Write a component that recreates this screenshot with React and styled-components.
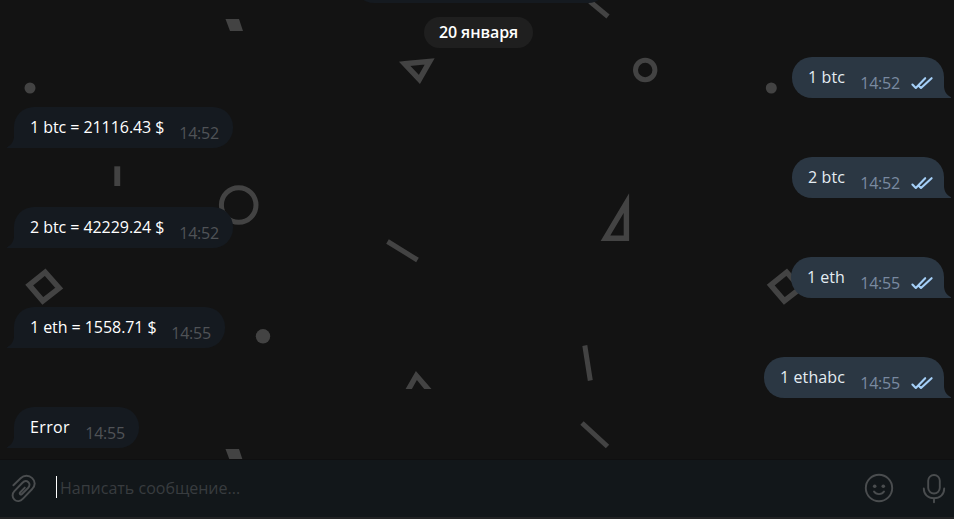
import React from 'react';
import styled, { createGlobalStyle } from 'styled-components';

const GlobalStyle = createGlobalStyle`
  * { box-sizing: border-box; }
  body { margin: 0; background: #131313; }
`;

const Page = styled.div`
  position: relative;
  display: flex;
  flex-direction: column;
  height: 519px;
  overflow: hidden;
  background: #131313;
  font: 16px/22px "Open Sans", "Noto Sans", sans-serif;
`;

const Wallpaper = styled.svg`
  position: absolute;
  inset: 0;
`;

const History = styled.main`
  position: relative;
  display: flex;
  flex-direction: column;
  height: 459px;
  overflow: hidden;
`;

const PreviousBubble = styled.div`
  flex: none;
  width: 254px;
  height: 3px;
  margin-left: 354px;
  overflow: hidden;
  &::after {
    content: "";
    display: block;
    height: 41px;
    margin-top: -38px;
    border-radius: 20px;
    background: #151a20;
  }
`;

const DateBadge = styled.div`
  flex: none;
  align-self: flex-start;
  width: 109px;
  height: 31px;
  margin: 14px 0 9px 424px;
  border-radius: 16px;
  background: #1f1f1f;
  color: #fff;
  font-weight: 600;
  letter-spacing: -0.1px;
  line-height: 30px;
  text-align: center;
  white-space: nowrap;
`;

const Row = styled.div`
  flex: none;
  display: flex;
  justify-content: ${(p) => (p.$out ? 'flex-end' : 'flex-start')};
  height: 50px;
  padding: 0 10px 0 14px;
`;

const Bubble = styled.div`
  position: relative;
  display: flex;
  width: ${(p) => p.$width}px;
  height: 41px;
  padding-left: 16px;
  border-radius: ${(p) => (p.$out ? '20px 20px 0 20px' : '20px 20px 20px 0')};
  background: ${(p) => (p.$out ? '#2b3743' : '#151a20')};
  white-space: nowrap;
`;

const Tail = styled.svg`
  position: absolute;
  bottom: 0;
  ${(p) => (p.$out ? 'right: -7px; transform: scaleX(-1);' : 'left: -7px;')}
`;

const Text = styled.span`
  flex: 1;
  margin-top: 9px;
  color: ${(p) => (p.$out ? '#e4ecf2' : '#fff')};
  letter-spacing: ${(p) => p.$spacing}px;
`;

const Time = styled.time`
  margin-top: 15px;
  margin-right: ${(p) => (p.$out ? 10 : 14)}px;
  color: ${(p) => (p.$out ? '#7a8aa0' : '#505357')};
  letter-spacing: -0.2px;
`;

const Ticks = styled.svg`
  margin: 19px 10px 0 0;
`;

const Composer = styled.footer`
  position: relative;
  display: flex;
  align-items: flex-start;
  height: 60px;
  border-top: 1px solid #0f0f10;
  border-bottom: 2px solid #222324;
  background: #12171a;
`;

const Icon = styled.svg`
  flex: none;
  margin: ${(p) => p.$margin};
  fill: none;
  stroke: #4a4d4f;
  stroke-width: 1.9;
  stroke-linecap: round;
  stroke-linejoin: round;
`;

const Caret = styled.span`
  width: 1px;
  height: 22px;
  margin: 16px 3px 0 20px;
  background: #fff;
`;

const Placeholder = styled.span`
  flex: 1;
  margin-top: 17px;
  color: #383c3f;
`;

const messages = [
  { out: true, text: '1 btc', time: '14:52', width: 152, spacing: 0.1 },
  { text: '1 btc = 21116.43 $', time: '14:52', width: 219, spacing: -0.06 },
  { out: true, text: '2 btc', time: '14:52', width: 152, spacing: 0.1 },
  { text: '2 btc = 42229.24 $', time: '14:52', width: 219, spacing: -0.06 },
  { out: true, text: '1 eth', time: '14:55', width: 153, spacing: 0 },
  { text: '1 eth = 1558.71 $', time: '14:55', width: 211, spacing: -0.06 },
  { out: true, text: '1 ethabc', time: '14:55', width: 180, spacing: 0.1 },
  { text: 'Error', time: '14:55', width: 125, spacing: 0.35 },
];

function Shapes() {
  return (
    <Wallpaper width="954" height="460" viewBox="0 0 954 460" fill="none" stroke="#434343" strokeWidth="5">
      <g fill="#434343" stroke="none">
        <circle cx="30" cy="88" r="5.5" />
        <circle cx="771.3" cy="88" r="5.5" />
        <circle cx="263" cy="336.3" r="7.2" />
        <path d="M225.5 19h13.5l4 12h-13z" />
        <path d="M225.5 449h13.5l4 12h-13z" />
        <path d="M114.3 166.3h5.9v19.7h-5.9z" />
      </g>
      <circle cx="645.2" cy="70" r="9.7" />
      <circle cx="238.7" cy="205" r="17.3" />
      <path d="M590 1.5l18 15" />
      <path d="M387.5 241.5l30 18.5M584.8 345.5l5.5 35M582 423l25.5 23.5" />
      <path strokeWidth="5.4" d="M404.7 63.8l25-2.4-10.3 18z" />
      <path strokeWidth="5.4" d="M626.4 203v35.3h-21z" />
      <path fill="#434343" stroke="none" d="M415.9 371l15.6 18h-7.3l-7.3-9-5 9h-6.3z" />
      <path strokeWidth="5.5" d="M45.2 272.2l14 16-16.4 12.7-13.6-15.9z" />
      <path strokeWidth="5.5" d="M786.7 272.2l14 16-16.4 12.7-13.6-15.9z" />
    </Wallpaper>
  );
}

function Message({ out, text, time, width, spacing }) {
  return (
    <Row $out={out}>
      <Bubble $out={out} $width={width}>
        <Tail $out={out} width="8" height="12" viewBox="0 0 8 12">
          <path d="M8 0H7C7 5 4.5 9 0 11.2V12H8z" fill={out ? '#2b3743' : '#151a20'} />
        </Tail>
        <Text $out={out} $spacing={spacing}>{text}</Text>
        <Time $out={out}>{time}</Time>
        {out && (
          <Ticks width="24" height="15" viewBox="0 0 24 15" fill="none" stroke="#a5d0f8" strokeWidth="2.1" strokeLinecap="round" strokeLinejoin="round">
            <path d="M2.4 8.6L5.8 12L15.2 2.2M9.4 10.4L11 12L21.6 2.2" />
          </Ticks>
        )}
      </Bubble>
    </Row>
  );
}

export default function App() {
  return (
    <>
      <GlobalStyle />
      <Page>
        <Shapes />
        <History>
          <PreviousBubble />
          <DateBadge>20 января</DateBadge>
          {messages.map((m, i) => (
            <Message key={i} {...m} />
          ))}
        </History>
        <Composer>
          <Icon width="26" height="30" viewBox="0 0 26 30" $margin="14px 0 0 10px">
            <path d="M3.4 11.3L10.6 4.3C14 1 19 1 22.2 4.2S25.2 11.5 22.2 15L13 24.6C10.3 27.6 6.8 27.9 4.4 25.6S1.9 19.8 4.4 17.2L12.2 9C14.3 6.8 16.8 6.8 18.4 8.2S19.9 12 18 14L12 20C10.7 21.3 8.9 19.8 10.1 18.5L14.8 13.6" />
          </Icon>
          <Caret />
          <Placeholder>Написать сообщение...</Placeholder>
          <Icon width="30" height="30" viewBox="0 0 30 30" $margin="13px 28px 0 0">
            <circle cx="15" cy="15" r="13.2" />
            <path d="M10 18.6C12 22 18 22 20 18.6" />
            <g fill="#4a4d4f" stroke="none">
              <circle cx="10.7" cy="13.2" r="1.8" />
              <circle cx="19.3" cy="13.2" r="1.8" />
            </g>
          </Icon>
          <Icon width="24" height="30" viewBox="0 0 24 30" $margin="14px 8px 0 0">
            <rect x="6.2" y="1" width="11.6" height="18.5" rx="5.8" />
            <path d="M1.8 14.5C1.8 20.5 6 24.2 12 24.2S22.2 20.5 22.2 14.5M12 24.2V28.3" />
          </Icon>
        </Composer>
      </Page>
    </>
  );
}
